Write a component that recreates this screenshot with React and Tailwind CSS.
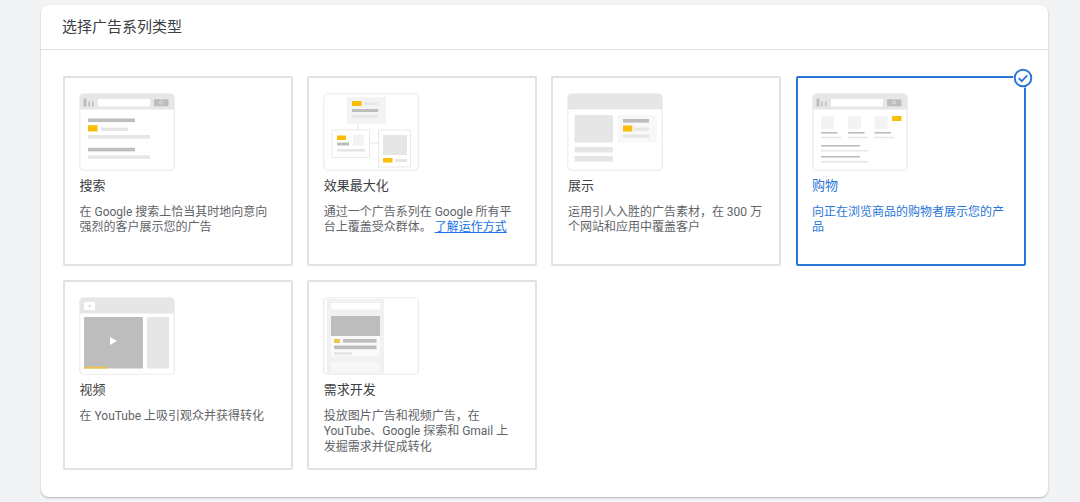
const G1 = "#bdbdbd";
const G2 = "#e6e6e6";
const G3 = "#f3f3f3";
const Y = "#fbbc04";

function Frame({ children }) {
  return (
    <svg width="96" height="78" viewBox="-1 -1 96 78" className="block">
      <rect x="-0.25" y="-0.25" width="94.5" height="76.5" rx="4" fill="#fff" stroke="#ebebeb" strokeWidth="1.2" />
      {children}
    </svg>
  );
}

function Bar({ search }) {
  return (
    <>
      <path d="M0 4a4 4 0 0 1 4-4h86a4 4 0 0 1 4 4v11.5H0z" fill={G2} />
      {search && (
        <>
          <rect x="3.5" y="4.5" width="3" height="8" fill={G1} />
          <rect x="8.5" y="7.5" width="1.5" height="5" fill={G1} />
          <rect x="12" y="7.5" width="1.5" height="5" fill={G1} />
          <rect x="18" y="5" width="52" height="7.5" fill="#fff" />
          <rect x="74" y="5.2" width="14.5" height="7" rx="1" fill={G1} />
          <circle cx="81" cy="8.5" r="1.6" fill="none" stroke="#eee" strokeWidth="0.7" />
        </>
      )}
    </>
  );
}

function SearchArt() {
  return (
    <Frame>
      <Bar search />
      <rect x="8" y="24.5" width="47" height="3.6" fill={G1} />
      <rect x="8" y="31.2" width="9.5" height="6.2" fill={Y} />
      <rect x="21" y="33.5" width="27" height="3.6" fill={G2} />
      <rect x="8" y="41" width="62" height="3.6" fill={G2} />
      <rect x="8" y="53.8" width="47" height="3.6" fill={G1} />
      <rect x="8" y="61.3" width="62" height="3.6" fill={G2} />
    </Frame>
  );
}

function MaxArt() {
  return (
    <Frame>
      <rect x="23" y="3" width="39" height="27" fill={G3} />
      <rect x="28" y="7" width="9.5" height="5" fill={Y} />
      <rect x="40" y="8.5" width="15" height="2.5" fill={G2} />
      <rect x="28" y="15" width="26" height="3" fill={G1} />
      <rect x="28" y="21" width="26" height="3" fill={G2} />
      <path d="M34 30v6M46 49h9" stroke="#ddd" strokeWidth="0.8" />
      <rect x="8" y="36" width="37.5" height="27.5" fill="#fff" stroke="#e4e4e4" strokeWidth="0.8" />
      <rect x="13" y="41.5" width="9" height="4.5" fill={Y} />
      <rect x="29" y="40.5" width="11" height="11" fill={G3} />
      <rect x="13" y="48.5" width="12" height="3" fill={G1} />
      <rect x="13" y="55" width="28" height="2.6" fill={G2} />
      <rect x="54.5" y="36" width="32" height="37" fill="#fff" stroke="#e4e4e4" strokeWidth="0.8" />
      <rect x="59" y="41" width="24" height="20" fill={G2} />
      <rect x="59" y="64" width="9.5" height="4.5" fill={Y} />
      <rect x="71" y="65" width="12" height="3" fill={G2} />
    </Frame>
  );
}

function DisplayArt() {
  return (
    <Frame>
      <path d="M0 4a4 4 0 0 1 4-4h86a4 4 0 0 1 4 4v11.5H0z" fill={G2} />
      <rect x="6.5" y="21" width="38.5" height="27.5" rx="1" fill={G2} />
      <rect x="6.5" y="53" width="38.5" height="5.5" rx="1" fill={G2} />
      <rect x="6.5" y="62" width="38.5" height="5.5" rx="1" fill={G2} />
      <rect x="50" y="21" width="39" height="27.5" fill="#f8f8f8" />
      <rect x="55" y="25" width="26" height="3.6" fill={G1} />
      <rect x="55" y="31.5" width="9.3" height="6" fill={Y} />
      <rect x="66" y="33.5" width="15" height="3.2" fill={G2} />
      <rect x="55" y="40.5" width="26" height="3.2" fill={G2} />
    </Frame>
  );
}

function ShopArt() {
  const cols = [8, 35, 61.5];
  return (
    <Frame>
      <Bar search />
      {cols.map((x) => (
        <g key={x}>
          <rect x={x} y="22" width="13" height="13" fill={G3} />
          <rect x={x} y="38" width="16.5" height="1.6" fill={G1} />
          <rect x={x} y="42.8" width="20" height="1.4" fill={G2} />
        </g>
      ))}
      <rect x="79" y="22" width="9.5" height="5" rx="0.5" fill={Y} />
      <rect x="8" y="51" width="39" height="1.6" fill={G1} />
      <rect x="8" y="56" width="47" height="1.5" fill={G2} />
      <rect x="8" y="62" width="39" height="1.6" fill={G1} />
      <rect x="8" y="67" width="47" height="1.5" fill={G2} />
    </Frame>
  );
}

function VideoArt() {
  return (
    <Frame>
      <path d="M0 4a4 4 0 0 1 4-4h86a4 4 0 0 1 4 4v11.5H0z" fill={G2} />
      <rect x="4" y="4" width="11" height="8" rx="1" fill="#fff" />
      <circle cx="9.5" cy="8" r="1.6" fill={G2} />
      <path d="M4 20a1 1 0 0 1 1-1h57a1 1 0 0 1 1 1v50.5H4z" fill={G1} />
      <rect x="4" y="68.8" width="23" height="1.8" fill="#f2c33f" />
      <rect x="67" y="19" width="22" height="51.5" rx="1" fill={G2} />
      <path d="M30 39l7 4-7 4z" fill="#fff" />
    </Frame>
  );
}

function DemandArt() {
  return (
    <Frame>
      <path d="M3 1h57v75H3z" fill="#f1f1f1" />
      <rect x="7" y="5" width="49" height="6.5" fill="#fff" />
      <rect x="7" y="18" width="49" height="20" fill={G1} />
      <rect x="7" y="38" width="49" height="20" fill="#fafafa" />
      <rect x="10" y="41" width="6" height="4" fill="#ecc94b" />
      <rect x="19" y="41" width="33.5" height="3.6" fill={G1} />
      <rect x="10" y="47.5" width="42.5" height="3.6" fill={G1} />
      <rect x="10" y="54" width="18" height="3" fill={G2} />
      <rect x="7" y="64" width="49" height="11" fill="#f7f7f7" />
    </Frame>
  );
}

function Check() {
  return (
    <svg width="20" height="20" viewBox="0 0 20 20" className="absolute -top-[10px] -right-[9px] bg-white rounded-full">
      <circle cx="10" cy="10" r="8.3" fill="#fff" stroke="#2a76d8" strokeWidth="2" />
      <path d="M5.8 10.2l2.9 2.9 5.6-5.8" fill="none" stroke="#2a76d8" strokeWidth="1.8" />
    </svg>
  );
}

function Tile({ art, title, selected, children }) {
  return (
    <div
      className={
        "relative h-[190px] border-2 pl-[14.5px] pr-[16.5px] pt-[15px] rounded-[2px] " +
        (selected ? "border-[#2a76d8]" : "border-[#e2e2e2]")
      }
    >
      <div className="-ml-[0.5px]">{art}</div>
      <div className={"mt-[6px] text-[13px] leading-[18px] " + (selected ? "text-[#2a76d8]" : "text-[#3c4043]")}>
        {title}
      </div>
      <div className={"mt-[9.5px] text-[12px] leading-[15.5px] " + (selected ? "text-[#2a76d8]" : "text-[#5f6368]")}>
        {children}
      </div>
      {selected && <Check />}
    </div>
  );
}

export default function App() {
  return (
    <div
      className="h-[502px] w-[1080px] overflow-hidden bg-[#f1f3f4] pl-[41px] pt-[5px]"
      style={{ fontFamily: 'Roboto, "Noto Sans CJK SC", sans-serif' }}
    >
      <div className="h-[492px] w-[1007px] rounded-[8px] bg-white shadow-[0_1px_2px_rgba(60,64,67,0.35)]">
        <div className="flex h-[45px] items-center border-b border-[#dfe1e3] pl-[21px] pt-[1px] text-[15px] text-[#3c4043]">
          选择广告系列类型
        </div>
        <div className="grid w-[985px] grid-cols-[230px_230px_230px_230px] gap-x-[14.2px] gap-y-[14px] pl-[22px] pt-[26px]">
          <Tile art={<SearchArt />} title="搜索">
            在 Google 搜索上恰当其时地向意向强烈的客户展示您的广告
          </Tile>
          <Tile art={<MaxArt />} title="效果最大化">
            通过一个广告系列在 Google 所有平台上覆盖受众群体。
            <a className="ml-[3px] text-[#1a73e8] underline">了解运作方式</a>
          </Tile>
          <Tile art={<DisplayArt />} title="展示">
            运用引人入胜的广告素材，在 300 万个网站和应用中覆盖客户
          </Tile>
          <Tile art={<ShopArt />} title="购物" selected>
            向正在浏览商品的购物者展示您的产品
          </Tile>
          <Tile art={<VideoArt />} title="视频">
            在 YouTube 上吸引观众并获得转化
          </Tile>
          <Tile art={<DemandArt />} title="需求开发">
            投放图片广告和视频广告，在 YouTube、Google 探索和 Gmail 上发掘需求并促成转化
          </Tile>
        </div>
      </div>
    </div>
  );
}
